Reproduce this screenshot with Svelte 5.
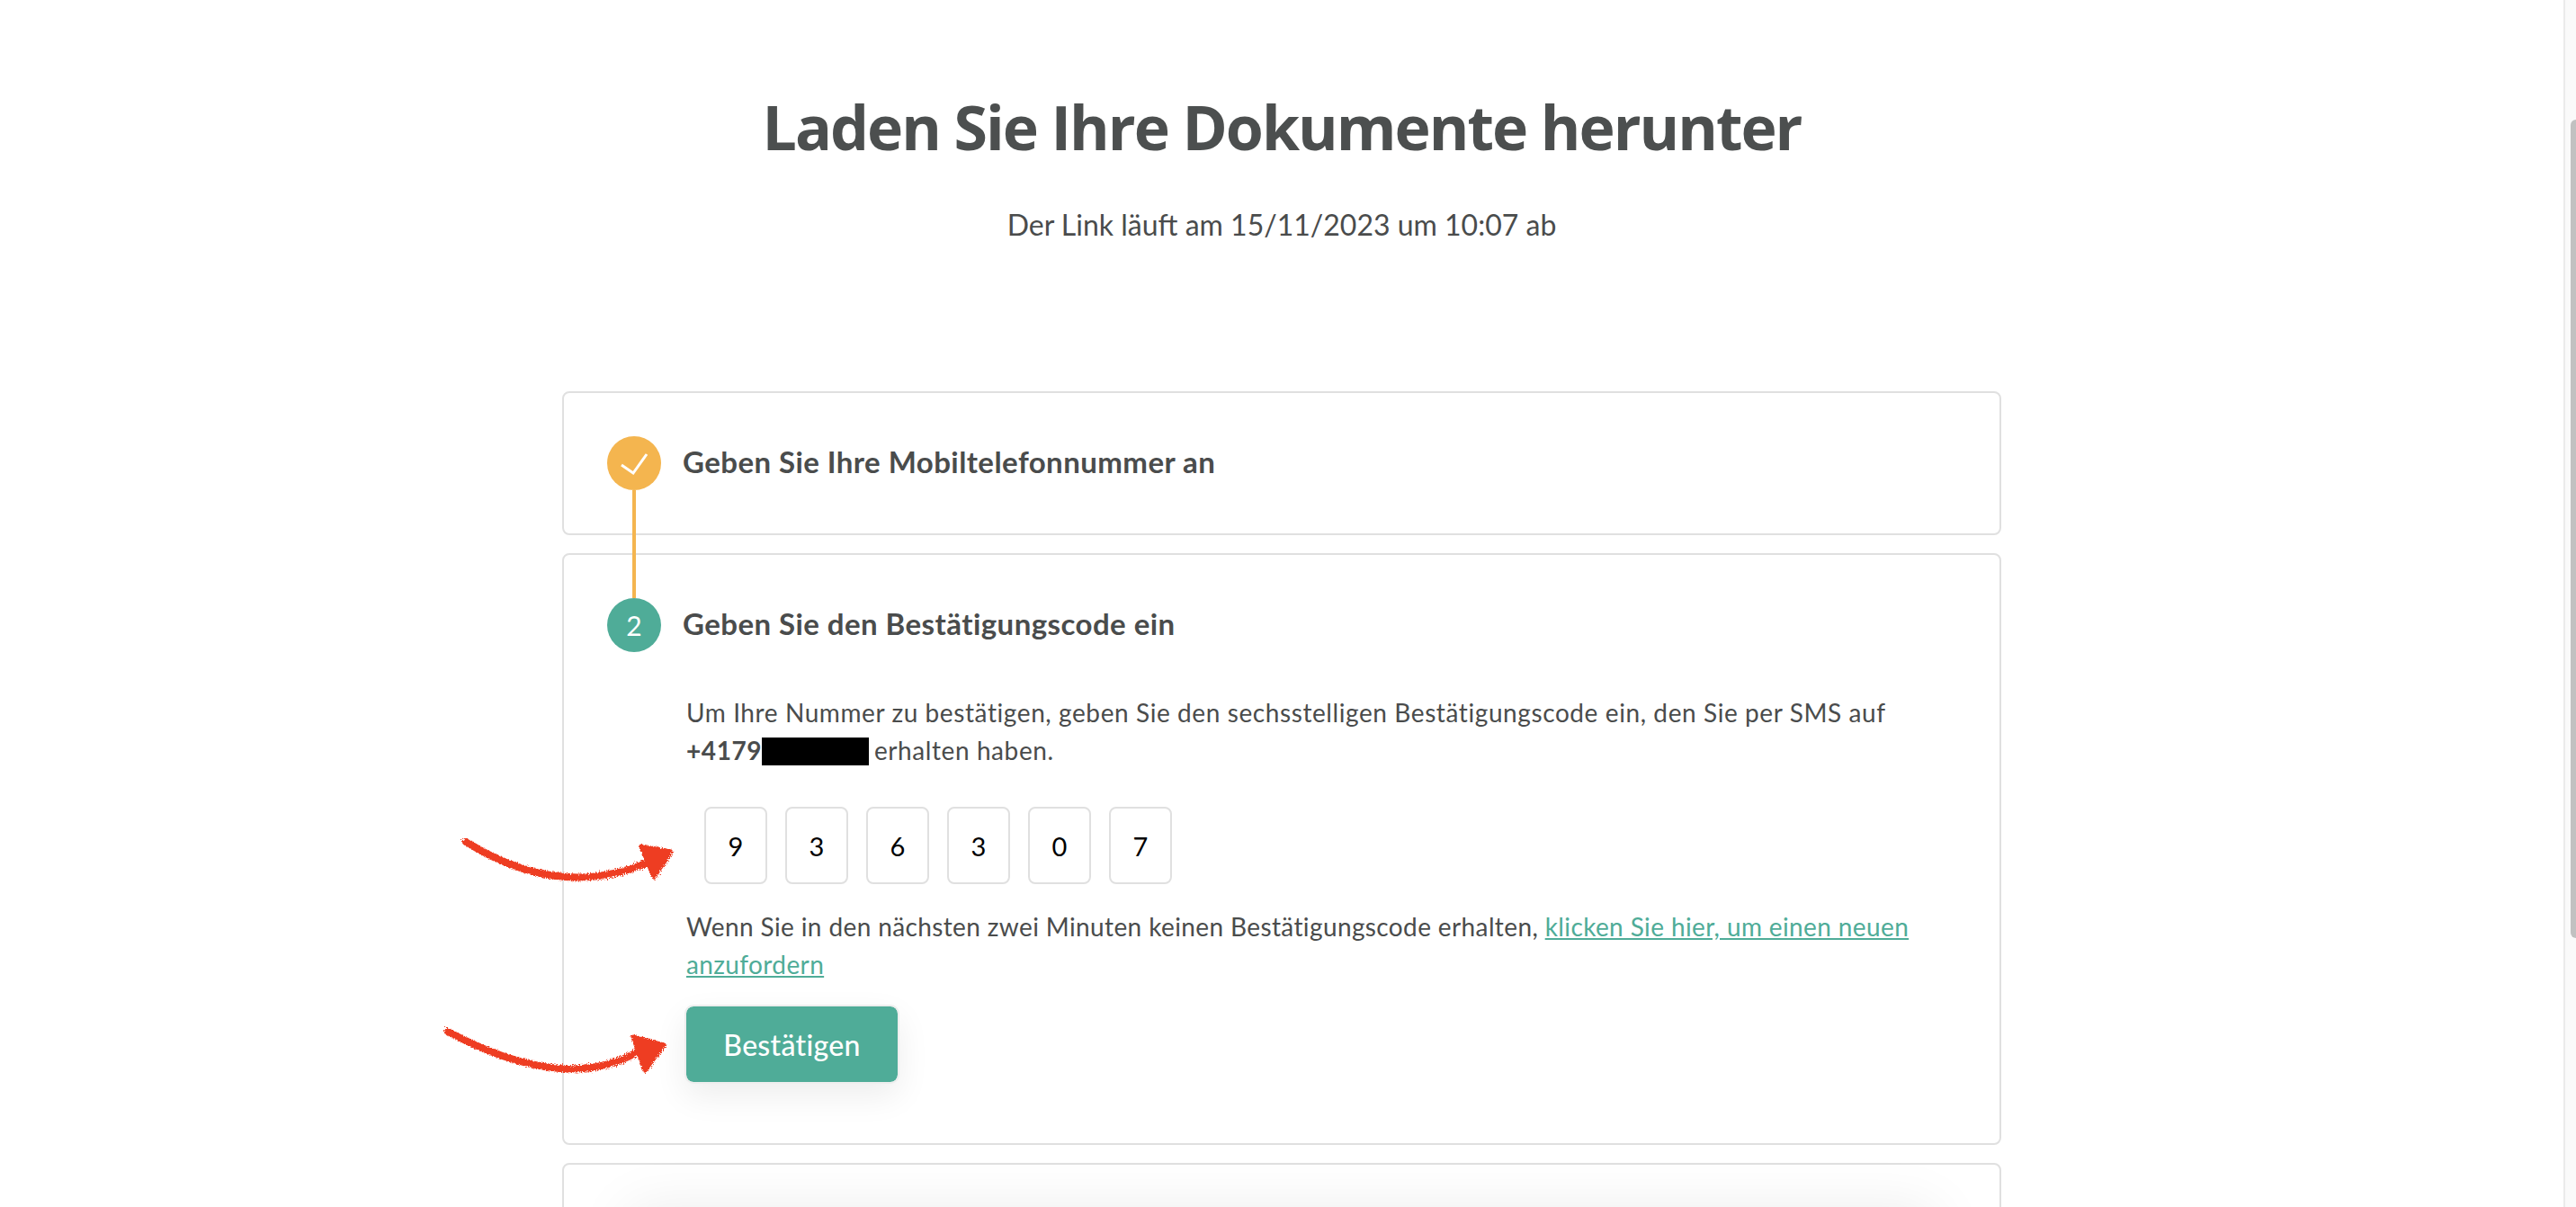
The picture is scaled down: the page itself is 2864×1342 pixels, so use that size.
<script lang="ts">
  let code = ['9', '3', '6', '3', '0', '7'];
</script>

<div class="page">
  <main class="content">
    <header class="head">
      <h1>Laden Sie Ihre Dokumente herunter</h1>
      <p class="expiry">Der Link läuft am 15/11/2023 um 10:07 ab</p>
    </header>

    <div class="steps">
      <section class="card">
        <div class="step-head">
          <span class="dot done">
            <svg viewBox="0 0 60 60" width="60" height="60">
              <polyline points="16,32 29,41 44,20" fill="none" stroke="#fff" stroke-width="3" />
            </svg>
            <span class="connector"></span>
          </span>
          <h2>Geben Sie Ihre Mobiltelefonnummer an</h2>
        </div>
      </section>

      <section class="card">
        <div class="step-head">
          <span class="dot active">2</span>
          <h2>Geben Sie den Bestätigungscode ein</h2>
        </div>
        <div class="step-body">
          <p class="intro">
            Um Ihre Nummer zu bestätigen, geben Sie den sechsstelligen Bestätigungscode ein, den Sie per SMS auf
            <br /><strong>+4179</strong><span class="redacted"></span> erhalten haben.
          </p>
          <div class="code">
            {#each code as digit}
              <div class="digit">{digit}</div>
            {/each}
          </div>
          <p class="resend">
            Wenn Sie in den nächsten zwei Minuten keinen Bestätigungscode erhalten,
            <a href="#new">klicken Sie hier, um einen neuen anzufordern</a>
          </p>
          <button class="confirm">Bestätigen</button>
        </div>
      </section>

      <section class="card last">
        <div class="ghost"></div>
      </section>
    </div>
  </main>

  <div class="scrollbar"><div class="thumb"></div></div>

  <!-- hand drawn arrows on top of the screenshot -->
  <svg class="marks" viewBox="0 0 2864 1342" width="2864" height="1342">
    <defs>
      <filter id="rough" x="-10%" y="-30%" width="120%" height="160%">
        <feTurbulence type="fractalNoise" baseFrequency="0.9" numOctaves="2" seed="4" result="n" />
        <feDisplacementMap in="SourceGraphic" in2="n" scale="6" />
      </filter>
    </defs>
    <g filter="url(#rough)" fill="#ee3d23" stroke="#ee3d23" stroke-linejoin="round" stroke-linecap="round">
      <path d="M518 936 Q622 1001 720 959" fill="none" stroke-width="8" />
      <polygon points="713,941 746,947 727,975" stroke-width="5" />
      <path d="M498 1147 Q628 1216 708 1170" fill="none" stroke-width="8" />
      <polygon points="704,1153 738,1162 717,1190" stroke-width="5" />
    </g>
  </svg>
</div>

<style>
  :global(body) {
    margin: 0;
    background: #fff;
  }

  .page {
    position: relative;
    display: flex;
    height: 1342px;
    overflow: hidden;
    font-family: "Lato", "Noto Sans", sans-serif;
    color: #4a4c4c;
  }

  .content {
    flex: 1;
    min-width: 0;
  }

  .scrollbar {
    width: 12px;
    flex-shrink: 0;
    padding-top: 133px;
    background: #fafafa;
    border-left: 2px solid #ebebeb;
    box-sizing: content-box;
  }

  .thumb {
    height: 910px;
    margin-left: 6px;
    background: #c1c1c1;
    border-radius: 8px 0 0 8px;
  }

  .head {
    text-align: center;
    padding-top: 98px;
  }

  h1 {
    margin: 0;
    font-family: "Open Sans", "Noto Sans", sans-serif;
    font-size: 68px;
    line-height: 86px;
    font-weight: 700;
    letter-spacing: -2px;
    color: #4c4f4f;
  }

  .expiry {
    margin: 44px 0 0;
    font-size: 32px;
    line-height: 44px;
  }

  .steps {
    width: 1600px;
    margin: 163px auto 0;
    display: flex;
    flex-direction: column;
    gap: 20px;
  }

  .card {
    border: 2px solid #e0e0e0;
    border-radius: 8px;
    padding: 48px;
  }

  .card.last {
    height: 300px;
    padding: 49px 72px 0;
  }

  .ghost {
    height: 200px;
    box-shadow: 0 0 60px rgba(0, 0, 0, 0.08);
  }

  .step-head {
    display: flex;
    align-items: center;
    gap: 24px;
  }

  h2 {
    margin: 0;
    padding-bottom: 4px;
    font-size: 33px;
    font-weight: 700;
    letter-spacing: 0.44px;
    line-height: 56px;
  }

  .dot {
    position: relative;
    width: 60px;
    height: 60px;
    border-radius: 50%;
    display: flex;
    align-items: center;
    justify-content: center;
    color: #fff;
    font-size: 30px;
    flex-shrink: 0;
  }

  .dot.done {
    background: #f4b54f;
  }

  .dot.active {
    background: #4fac98;
    z-index: 1;
  }

  .connector {
    position: absolute;
    left: 28px;
    top: 60px;
    width: 4px;
    height: 120px;
    background: #f4b54f;
    z-index: 2;
  }

  .step-body {
    padding: 46px 0 0 88px;
  }

  .step-body p {
    margin: 0;
    font-size: 28px;
    line-height: 42px;
    color: #4a4c4c;
  }

  .intro {
    letter-spacing: 0.59px;
  }

  .resend {
    letter-spacing: 0.38px;
  }

  .redacted {
    display: inline-block;
    width: 119px;
    height: 31px;
    margin-right: -2px;
    background: #000;
    vertical-align: -6px;
  }

  a {
    color: #4fac98;
  }

  .code {
    display: flex;
    gap: 20px;
    margin: 42px 0 26px 20px;
  }

  .digit {
    width: 70px;
    height: 86px;
    box-sizing: border-box;
    border: 2px solid #e0e0e0;
    border-radius: 8px;
    display: flex;
    align-items: center;
    justify-content: center;
    font-size: 29px;
    color: #000;
  }

  .confirm {
    display: block;
    margin: 24px 0 18px -2px;
    width: 239px;
    height: 88px;
    border: 2px solid #eee;
    border-radius: 10px;
    background: #4fac98;
    background-clip: padding-box;
    color: #fff;
    font-family: inherit;
    font-size: 32px;
    font-weight: 500;
    letter-spacing: 0.3px;
    box-shadow: 0 14px 36px rgba(0, 0, 0, 0.07);
  }

  .marks {
    position: absolute;
    left: 0;
    top: 0;
    pointer-events: none;
  }
</style>
